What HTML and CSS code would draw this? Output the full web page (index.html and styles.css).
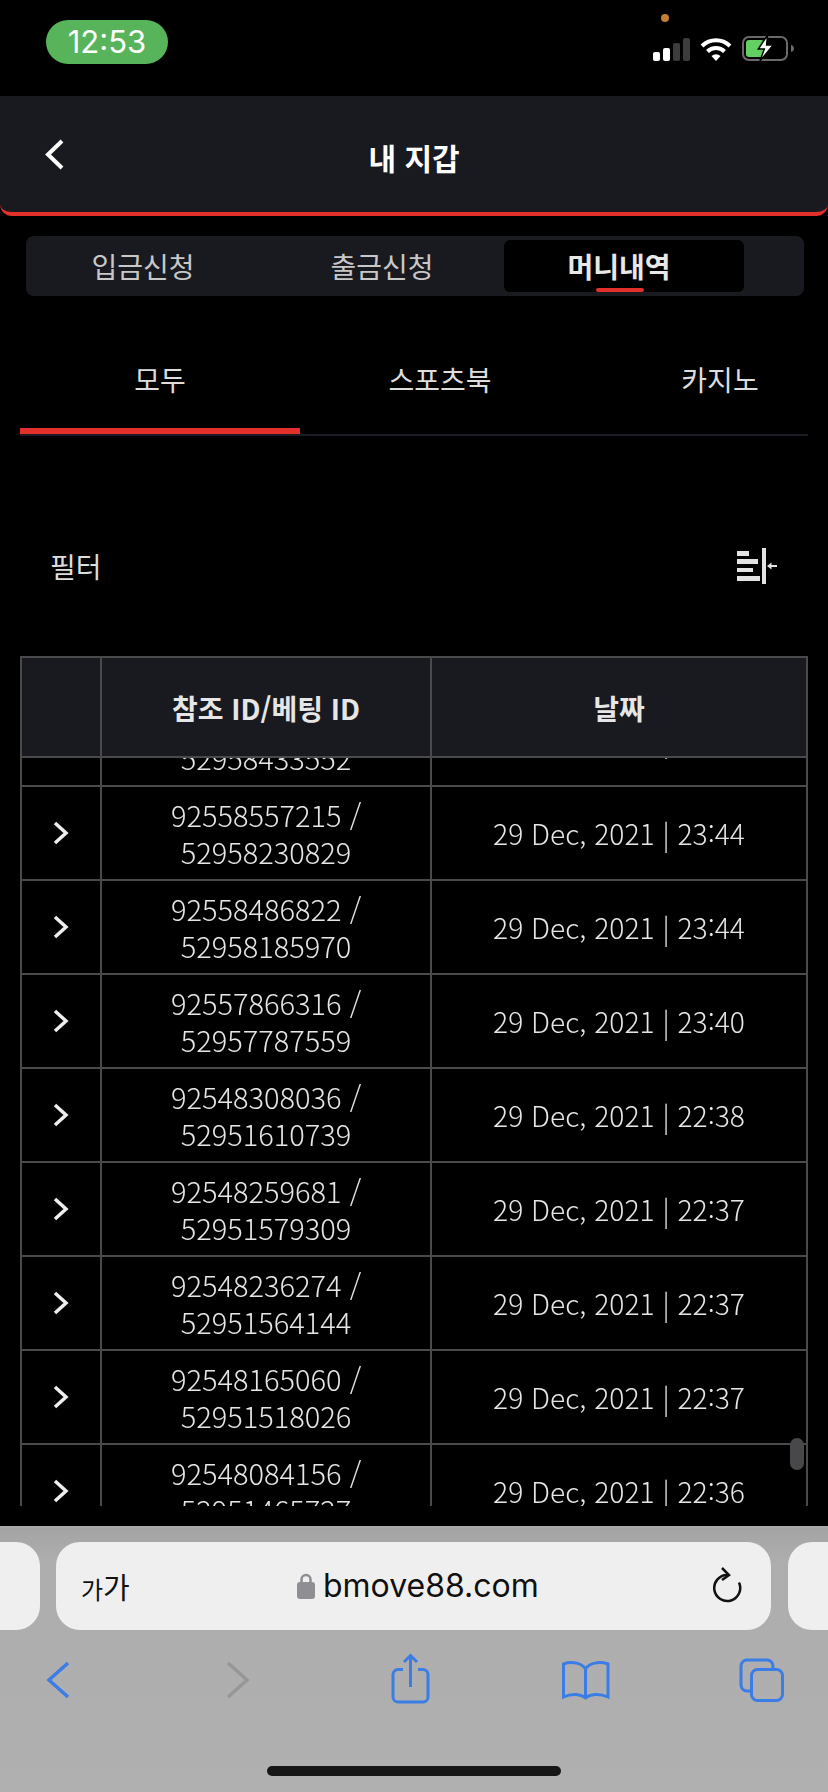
FILE: index.html
```html
<!DOCTYPE html>
<html lang="ko">

<head>
    <meta charset="UTF-8">
    <title>내 지갑</title>
    <link rel="stylesheet" href="styles.css">
</head>

<body>
    <div class="page">
        <div class="status">
            <div class="clock">12:53</div>
            <div class="status-icons">
                <span class="cam-dot"></span>
                <svg class="signal" width="37" height="23" viewBox="0 0 37 23">
                    <rect x="0" y="14" width="7" height="9" rx="2" fill="#fff"/>
                    <rect x="10" y="10" width="7" height="13" rx="2" fill="#fff"/>
                    <rect x="20" y="5" width="7" height="18" rx="2" fill="#3c3c3c"/>
                    <rect x="30" y="0" width="7" height="23" rx="2" fill="#3c3c3c"/>
                </svg>
                <svg class="wifi" width="32" height="24" viewBox="0 0 32 24">
                    <path d="M2 9A20 20 0 0 1 30 9" fill="none" stroke="#fff" stroke-width="4"/>
                    <path d="M7.5 14.5A12 12 0 0 1 24.5 14.5" fill="none" stroke="#fff" stroke-width="4"/>
                    <path d="M16 24L11.5 19A7 7 0 0 1 20.5 19Z" fill="#fff"/>
                </svg>
                <svg class="battery" width="52" height="27" viewBox="0 0 52 27">
                    <rect x="1" y="2" width="44" height="23" rx="6" fill="none" stroke="#6a6a6a" stroke-width="2"/>
                    <rect x="4" y="5" width="18" height="17" rx="3" fill="#62cf62"/>
                    <path d="M49 10c2 .5 3 2 3 3.500s-1 3-3 3.500z" fill="#6a6a6a"/>
                    <path d="M25.600 0L16.300 14H22.300L18 26L31.300 10H24.600Z" fill="#fff" stroke="#000" stroke-width="1.500"/>
                </svg>
            </div>
        </div>

        <div class="header">
            <svg class="back" width="19" height="31" viewBox="0 0 19 31">
                <path d="M17 2L3 15.500L17 29" fill="none" stroke="#fff" stroke-width="4"/>
            </svg>
            <div class="title">내 지갑</div>
        </div>

        <div class="wallet-tabs">
            <div class="wallet-tab tab-first">입금신청</div>
            <div class="wallet-tab tab-second">출금신청</div>
            <div class="wallet-tab tab-active">머니내역</div>
        </div>

        <div class="sub-tabs">
            <div class="sub-tab sub-active">모두</div>
            <div class="sub-tab">스포츠북</div>
            <div class="sub-tab">카지노</div>
        </div>

        <div class="filter">
            <span>필터</span>
            <svg width="40" height="36" viewBox="0 0 40 36" fill="#e2e2e2">
                <rect x="0" y="3" width="12" height="5"/>
                <rect x="0" y="11" width="21" height="5"/>
                <rect x="0" y="20" width="16" height="4"/>
                <rect x="0" y="28" width="23" height="5"/>
                <rect x="25" y="0" width="4" height="36"/>
                <path d="M30 18l4.500-3.500v2.500H40v2h-5.500v2.500z"/>
            </svg>
        </div>

        <div class="table">
            <div class="thead">
                <div class="col-arrow"></div>
                <div class="col-id">참조 ID/베팅 ID</div>
                <div class="col-date">날짜</div>
            </div>
            <div class="tbody">
                <div class="rows">
                    <div class="row">
                        <div class="col-arrow"></div>
                        <div class="col-id">&nbsp;<br>52958433552</div>
                        <div class="col-date">29 Dec, 2021 | 23:46</div>
                    </div>
                    <div class="row">
                        <div class="col-arrow"><svg width="16" height="24" viewBox="0 0 16 24"><path d="M2 2L13 12L2 22" fill="none" stroke="#eee" stroke-width="3.500"/></svg></div>
                        <div class="col-id">92558557215 /<br>52958230829</div>
                        <div class="col-date">29 Dec, 2021 | 23:44</div>
                    </div>
                    <div class="row">
                        <div class="col-arrow"><svg width="16" height="24" viewBox="0 0 16 24"><path d="M2 2L13 12L2 22" fill="none" stroke="#eee" stroke-width="3.500"/></svg></div>
                        <div class="col-id">92558486822 /<br>52958185970</div>
                        <div class="col-date">29 Dec, 2021 | 23:44</div>
                    </div>
                    <div class="row">
                        <div class="col-arrow"><svg width="16" height="24" viewBox="0 0 16 24"><path d="M2 2L13 12L2 22" fill="none" stroke="#eee" stroke-width="3.500"/></svg></div>
                        <div class="col-id">92557866316 /<br>52957787559</div>
                        <div class="col-date">29 Dec, 2021 | 23:40</div>
                    </div>
                    <div class="row">
                        <div class="col-arrow"><svg width="16" height="24" viewBox="0 0 16 24"><path d="M2 2L13 12L2 22" fill="none" stroke="#eee" stroke-width="3.500"/></svg></div>
                        <div class="col-id">92548308036 /<br>52951610739</div>
                        <div class="col-date">29 Dec, 2021 | 22:38</div>
                    </div>
                    <div class="row">
                        <div class="col-arrow"><svg width="16" height="24" viewBox="0 0 16 24"><path d="M2 2L13 12L2 22" fill="none" stroke="#eee" stroke-width="3.500"/></svg></div>
                        <div class="col-id">92548259681 /<br>52951579309</div>
                        <div class="col-date">29 Dec, 2021 | 22:37</div>
                    </div>
                    <div class="row">
                        <div class="col-arrow"><svg width="16" height="24" viewBox="0 0 16 24"><path d="M2 2L13 12L2 22" fill="none" stroke="#eee" stroke-width="3.500"/></svg></div>
                        <div class="col-id">92548236274 /<br>52951564144</div>
                        <div class="col-date">29 Dec, 2021 | 22:37</div>
                    </div>
                    <div class="row">
                        <div class="col-arrow"><svg width="16" height="24" viewBox="0 0 16 24"><path d="M2 2L13 12L2 22" fill="none" stroke="#eee" stroke-width="3.500"/></svg></div>
                        <div class="col-id">92548165060 /<br>52951518026</div>
                        <div class="col-date">29 Dec, 2021 | 22:37</div>
                    </div>
                    <div class="row">
                        <div class="col-arrow"><svg width="16" height="24" viewBox="0 0 16 24"><path d="M2 2L13 12L2 22" fill="none" stroke="#eee" stroke-width="3.500"/></svg></div>
                        <div class="col-id">92548084156 /<br>52951465727</div>
                        <div class="col-date">29 Dec, 2021 | 22:36</div>
                    </div>
                </div>
            </div>
            <div class="scrollbar"></div>
        </div>

        <div class="safari">
            <div class="url-row">
                <div class="stub stub-left"></div>
                <div class="url-pill">
                    <span class="aa"><small>가</small>가</span>
                    <span class="url">
                        <svg width="18" height="26" viewBox="0 0 18 26">
                            <path d="M4.500 10V6.500a4.500 4.500 0 0 1 9 0V10" fill="none" stroke="#8e8e93" stroke-width="2.500"/>
                            <rect x="0" y="9" width="18" height="17" rx="3" fill="#8e8e93"/>
                        </svg>
                        bmove88.com
                    </span>
                    <svg class="reload" width="30" height="36" viewBox="0 0 30 36">
                        <path d="M15 8A13 13 0 1 0 27 15.500" fill="none" stroke="#111" stroke-width="2.500"/>
                        <path d="M10 1L17 8L10 13" fill="none" stroke="#111" stroke-width="2.500"/>
                    </svg>
                </div>
                <div class="stub stub-right"></div>
            </div>

            <div class="nav-row">
                <svg width="60" height="60" viewBox="0 0 60 60"><path d="M40 13L21 30L40 47" fill="none" stroke="#3b7de6" stroke-width="3.500"/></svg>
                <svg width="60" height="60" viewBox="0 0 60 60"><path d="M24 13L43 30L24 47" fill="none" stroke="#979797" stroke-width="3.500"/></svg>
                <svg width="60" height="60" viewBox="0 0 60 60" fill="none" stroke="#3b7de6" stroke-width="3">
                    <path d="M23 19.500H18a5 5 0 0 0-5 5V47a5 5 0 0 0 5 5H43a5 5 0 0 0 5-5V24.500a5 5 0 0 0-5-5H38"/>
                    <path d="M30.500 37V6M24 12L30.500 5.500L37 12"/>
                </svg>
                <svg width="60" height="60" viewBox="0 0 60 60" fill="none" stroke="#3b7de6" stroke-width="3">
                    <path d="M29.500 19C26 13 16 11 7.500 14V47C16 43 25 44 29.500 48C34 44 43 43 52 47V14C43 11 33 13 29.500 19ZM29.500 19V48"/>
                </svg>
                <svg width="60" height="60" viewBox="0 0 60 60" fill="none" stroke="#3b7de6" stroke-width="3">
                    <rect x="19.500" y="19.500" width="31" height="31" rx="6"/>
                    <path d="M41 19V16a6 6 0 0 0-6-6H15a6 6 0 0 0-6 6V35a6 6 0 0 0 6 6h4"/>
                </svg>
            </div>
            <div class="home-bar"></div>
        </div>
    </div>
</body>

</html>
```

FILE: styles.css
```css
* {
    box-sizing: border-box;
}

body {
    margin: 0;
    background: #000;
}

.page {
    width: 828px;
    height: 1792px;
    overflow: hidden;
    background: #000;
    color: #ddd;
    font-family: "Noto Sans CJK KR", sans-serif;
}

/* status bar */
.status {
    height: 96px;
    padding: 20px 34px 0 46px;
    display: flex;
    justify-content: space-between;
}

.clock {
    width: 122px;
    height: 44px;
    border-radius: 22px;
    background: #57b45b;
    color: #fff;
    font: 400 31px/44px Inter, sans-serif;
    text-align: center;
}

.status-icons {
    position: relative;
    height: 44px;
    display: flex;
    align-items: flex-end;
    gap: 10px;
}

.signal {
    margin-bottom: 3px;
}

.wifi {
    margin-bottom: 3px;
}

.battery {
    margin-bottom: 2px;
}

.cam-dot {
    position: absolute;
    left: 8px;
    top: -6px;
    width: 8px;
    height: 8px;
    border-radius: 50%;
    background: #c07f35;
}

/* header */
.header {
    height: 120px;
    background: #181a1f;
    border-bottom: 4px solid #e3302a;
    border-radius: 0 0 12px 12px;
    display: grid;
    grid-template-columns: 1fr auto 1fr;
    align-items: center;
    padding: 0 45px;
}

.title {
    font-size: 30px;
    font-weight: 700;
    color: #fff;
    padding-top: 6px;
}

/* 입금/출금/머니 tabs */
.wallet-tabs {
    width: 778px;
    height: 60px;
    margin: 20px 0 0 26px;
    padding: 4px 0;
    border-radius: 8px;
    background: #181a1f;
    display: grid;
    grid-template-columns: 234px 244px 240px;
}

.wallet-tab {
    font-size: 28px;
    line-height: 52px;
    text-align: center;
    color: #c8c8c8;
}

.tab-active {
    position: relative;
    padding-right: 10px;
    background: #000;
    border-radius: 6px;
    color: #e8e8e8;
    font-weight: 700;
}

.tab-active:after {
    content: "";
    position: absolute;
    left: 92px;
    bottom: 0;
    width: 48px;
    height: 4px;
    border-radius: 2px;
    background: #e3302a;
}

/* 모두/스포츠북/카지노 */
.sub-tabs {
    width: 788px;
    margin: 40px 0 0 20px;
    display: flex;
    overflow: hidden;
    border-bottom: 2px solid #1c1b24;
}

.sub-tab {
    flex: 0 0 280px;
    height: 98px;
    padding-bottom: 6px;
    border-bottom: 6px solid transparent;
    font-size: 28px;
    line-height: 86px;
    text-align: center;
}

.sub-active {
    border-bottom-color: #e3302a;
}

/* filter */
.filter {
    height: 60px;
    margin-top: 100px;
    padding: 0 51px 0 50px;
    display: flex;
    justify-content: space-between;
    align-items: center;
    font-size: 28px;
}

/* table */
.table {
    position: relative;
    width: 788px;
    margin: 60px 0 0 20px;
    font-size: 28px;
    text-align: center;
    color: #e6e6e6;
}

.thead {
    height: 102px;
    display: flex;
    border: 2px solid #4a4a4c;
    background: #181a1f;
    font-weight: 700;
}

.thead .col-id,
.thead .col-date {
    line-height: 98px;
    padding-top: 1px;
}

.tbody {
    height: 748px;
    overflow: hidden;
}

.rows {
    margin-top: -65px;
    will-change: opacity;
}

.row {
    height: 94px;
    display: flex;
    border: solid #4a4a4c;
    border-width: 0 2px 2px;
    font-weight: 300;
}

.col-arrow {
    width: 80px;
    flex: none;
    border-right: 2px solid #4a4a4c;
    display: flex;
    justify-content: center;
    align-items: center;
}

.col-id {
    width: 330px;
    flex: none;
    border-right: 2px solid #4a4a4c;
    font-size: 29px;
    line-height: 37px;
    padding-top: 9px;
}

.thead .col-id {
    font-size: 28px;
}

.col-date {
    flex: 1;
    font-size: 28.2px;
    line-height: 92px;
}

.thead .col-date {
    font-size: 28px;
}

.scrollbar {
    position: absolute;
    left: 770px;
    top: 782px;
    width: 14px;
    height: 32px;
    border-radius: 7px;
    background: #48484a;
}

/* safari toolbar */
.safari {
    height: 266px;
    margin-top: 20px;
    padding-top: 16px;
    background: linear-gradient(#a4a4a4, #adadad 30px, #b0b0b0);
    border-top: 2px solid #a9a9a9;
}

.url-row {
    height: 88px;
    display: flex;
    gap: 16px;
    margin-top: -2px;
}

.stub {
    width: 40px;
    flex: none;
    background: #efefef;
}

.stub-left {
    border-radius: 0 24px 24px 0;
}

.stub-right {
    margin-left: 1px;
    border-radius: 24px 0 0 24px;
}

.url-pill {
    width: 715px;
    flex: none;
    padding: 0 29px 0 25px;
    display: flex;
    justify-content: space-between;
    align-items: center;
    border-radius: 24px;
    background: #efefef;
    color: #111;
}

.aa {
    font-size: 29px;
    line-height: 1;
}

.aa small {
    font-size: 24px;
}

.url {
    display: flex;
    align-items: center;
    gap: 8px;
    font: 400 32px/1 Inter, sans-serif;
    padding-right: 6px;
}

.reload {
    margin-top: -2px;
}

.nav-row {
    margin-top: 20px;
    padding-left: 28px;
    display: flex;
    gap: 116px;
}

.home-bar {
    width: 294px;
    height: 10px;
    margin: 56px auto 0;
    border-radius: 5px;
    background: #161616;
}
```
